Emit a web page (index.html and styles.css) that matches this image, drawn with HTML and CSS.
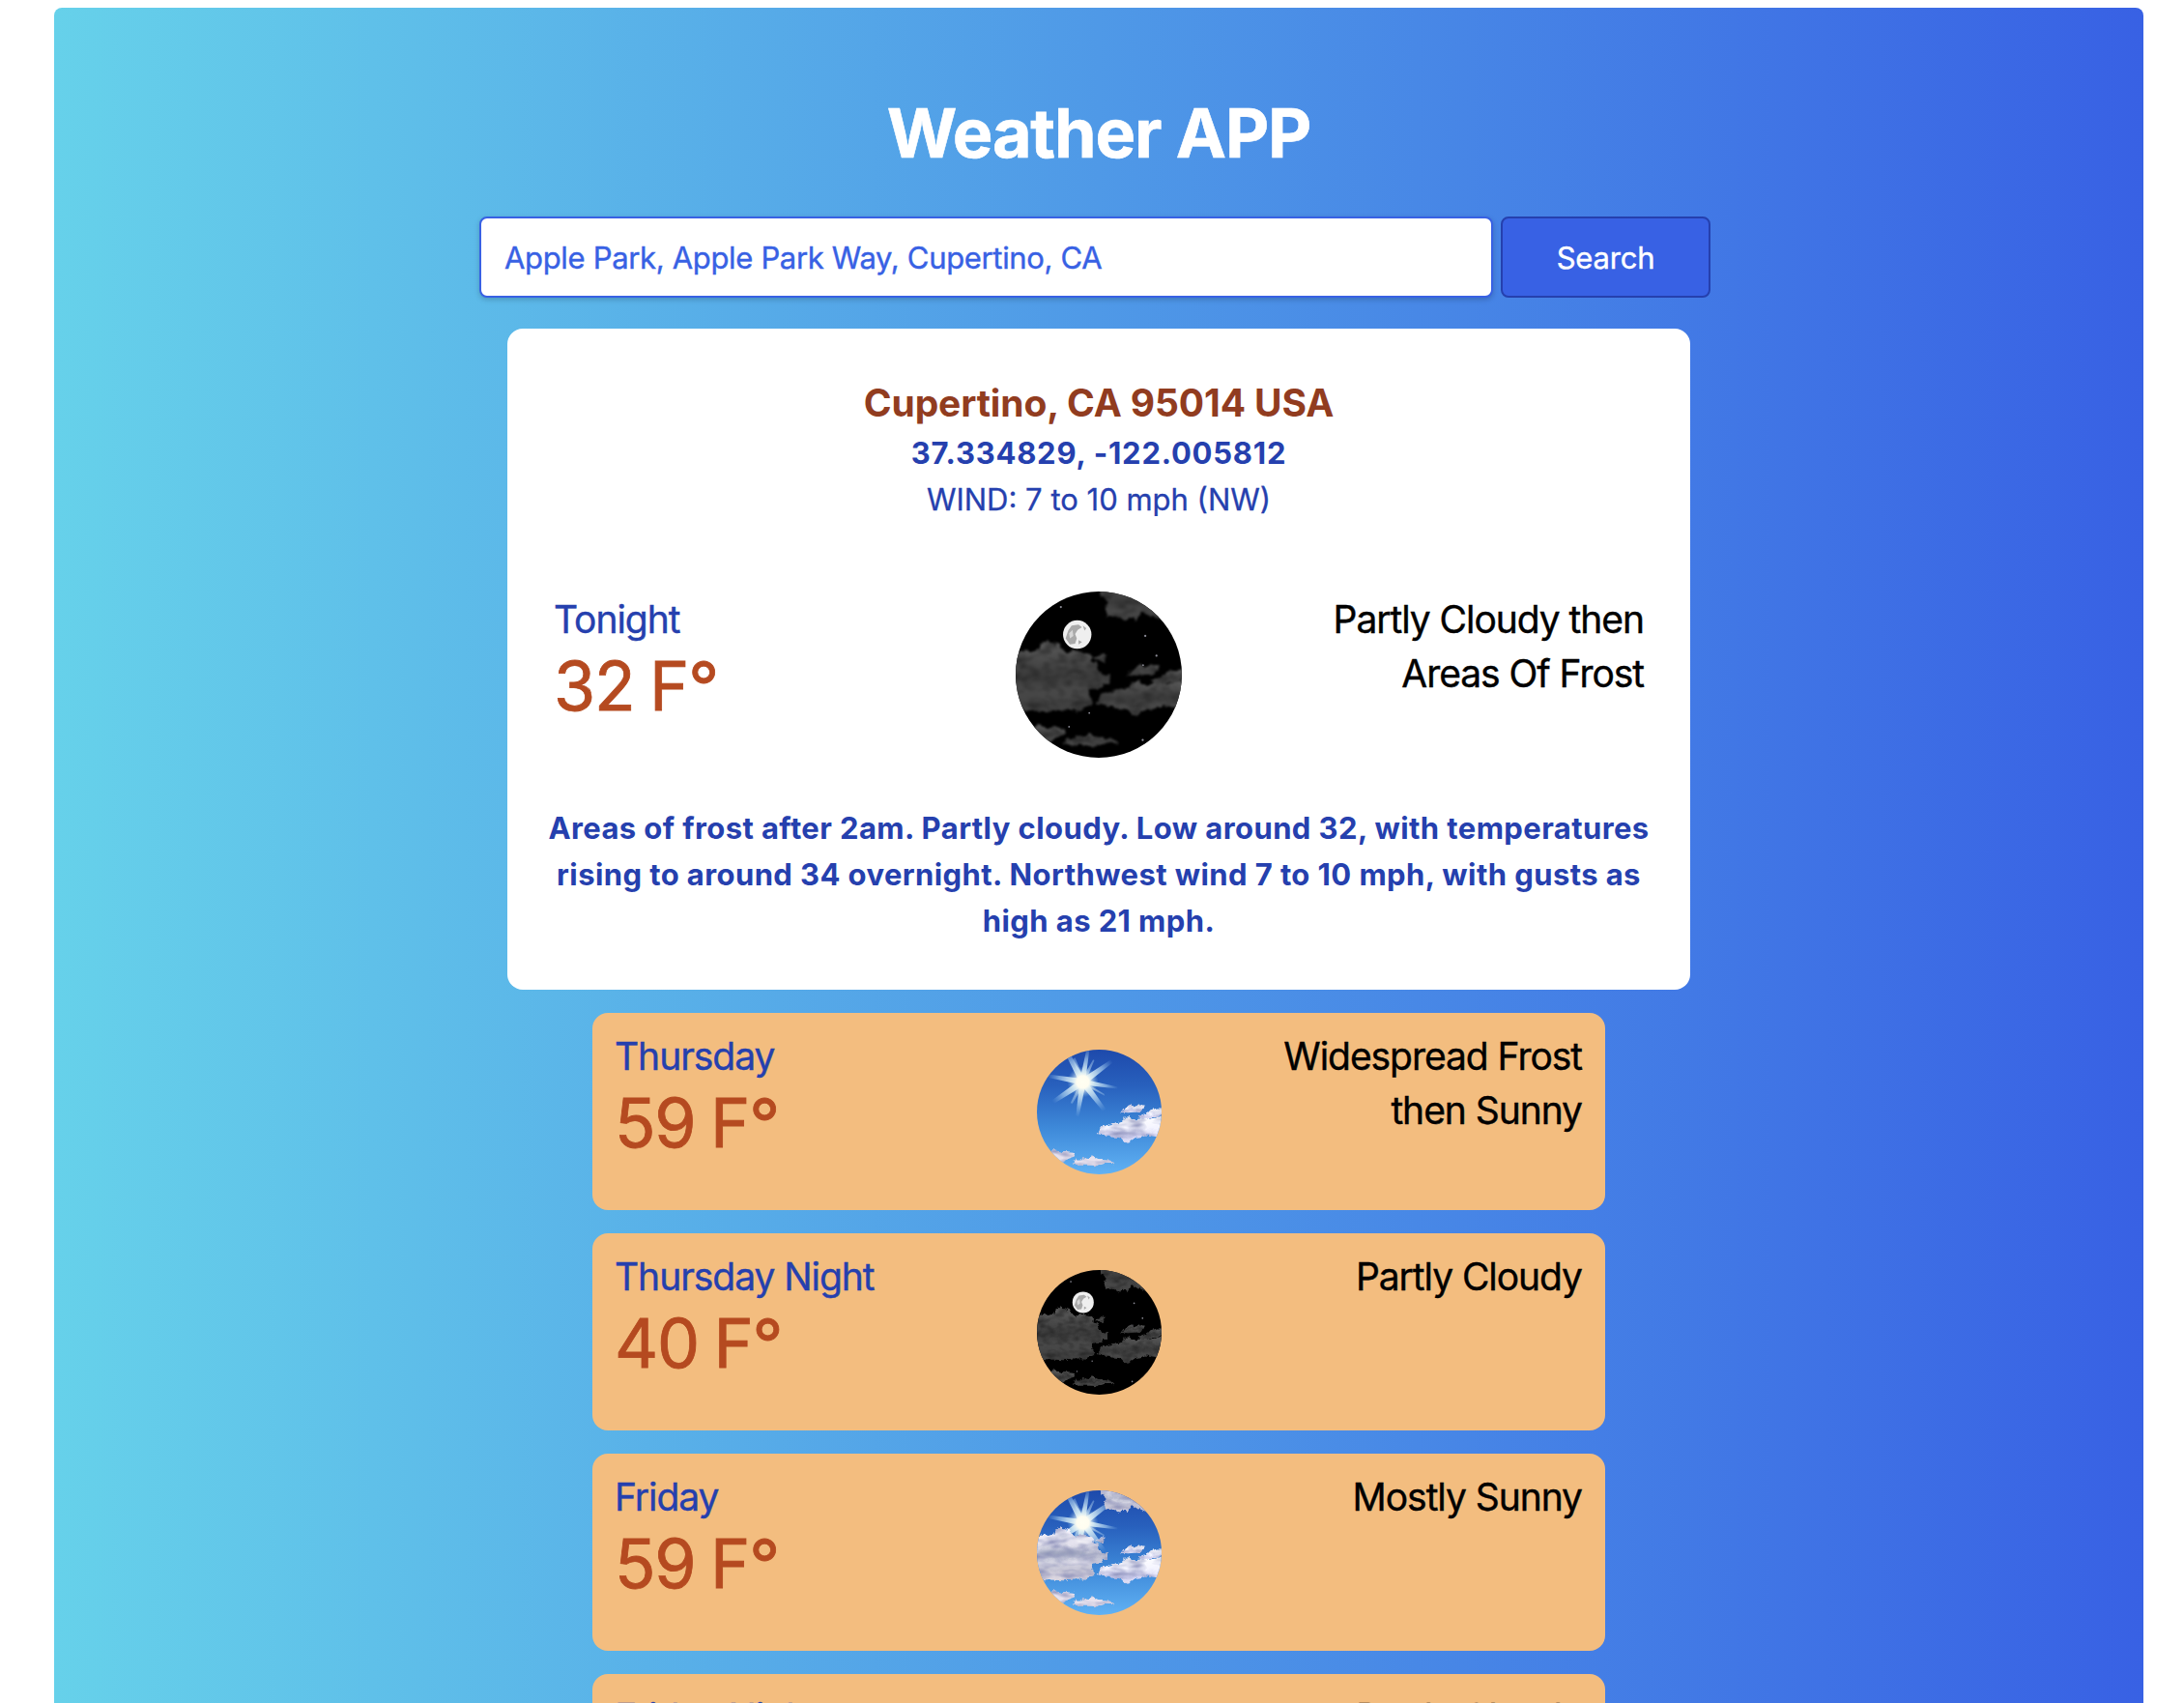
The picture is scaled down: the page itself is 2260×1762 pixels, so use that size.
FILE: index.html
```html
<!DOCTYPE html>
<html lang="en">
<head>
<meta charset="utf-8">
<title>Weather APP</title>
<link rel="stylesheet" href="styles.css">
</head>
<body>
<svg class="defs" width="0" height="0" aria-hidden="true">
  <defs>
    <linearGradient id="sky" x1="0" y1="0" x2="0" y2="1">
      <stop offset="0" stop-color="#1d48aa"/><stop offset=".3" stop-color="#2860bd"/>
      <stop offset=".62" stop-color="#3d88d8"/><stop offset="1" stop-color="#62b3f5"/>
    </linearGradient>
    <linearGradient id="dayCloud" x1="0" y1="0" x2="0" y2="1">
      <stop offset="0" stop-color="#f8f6ff"/><stop offset=".3" stop-color="#e4e2ee"/>
      <stop offset=".5" stop-color="#b4b8cc"/><stop offset=".65" stop-color="#d4d4e2"/>
      <stop offset=".8" stop-color="#c4c3d3"/><stop offset="1" stop-color="#e2dce4"/>
    </linearGradient>
    <linearGradient id="whiteCloud" x1="0" y1="0" x2="0" y2="1">
      <stop offset="0" stop-color="#ffffff"/><stop offset=".45" stop-color="#f4f4ff"/>
      <stop offset=".75" stop-color="#d0d0f0"/><stop offset="1" stop-color="#e4e4f8"/>
    </linearGradient>
    <linearGradient id="nightCloud" x1="0" y1="0" x2="0" y2="1">
      <stop offset="0" stop-color="#5a5a5a"/><stop offset=".3" stop-color="#484848"/>
      <stop offset=".5" stop-color="#3a3a3a"/><stop offset=".7" stop-color="#484848"/>
      <stop offset="1" stop-color="#404040"/>
    </linearGradient>
    <radialGradient id="ray" gradientUnits="userSpaceOnUse" cx="210" cy="169" r="112">
      <stop offset="0" stop-color="#fffff4"/><stop offset=".3" stop-color="#dff0f4" stop-opacity=".95"/>
      <stop offset=".65" stop-color="#a9cfee" stop-opacity=".65"/><stop offset="1" stop-color="#7fb2e6" stop-opacity="0"/>
    </radialGradient>
    <radialGradient id="glow">
      <stop offset="0" stop-color="#fffff2"/><stop offset=".4" stop-color="#fffdf0"/>
      <stop offset=".55" stop-color="#e4f1f3" stop-opacity=".7"/><stop offset="1" stop-color="#8fc0e8" stop-opacity="0"/>
    </radialGradient>
    <filter id="ragged" x="-5%" y="-10%" width="110%" height="120%" color-interpolation-filters="sRGB">
      <feTurbulence type="fractalNoise" baseFrequency=".06" numOctaves="3" seed="4" result="n"/>
      <feDisplacementMap in="SourceGraphic" in2="n" scale="18" xChannelSelector="R" yChannelSelector="G" result="shape"/>
      <feTurbulence type="fractalNoise" baseFrequency=".02 .05" numOctaves="2" seed="9"/>
      <feColorMatrix values="0 0 0 0 .5  0 0 0 0 .52  0 0 0 0 .7  1.6 0 0 0 -.6"/>
      <feComposite in2="shape" operator="in" result="tone"/>
      <feMerge><feMergeNode in="shape"/><feMergeNode in="tone"/></feMerge>
      <feGaussianBlur stdDeviation="1.7"/>
    </filter>
    <filter id="ragged-night" x="-5%" y="-10%" width="110%" height="120%" color-interpolation-filters="sRGB">
      <feTurbulence type="fractalNoise" baseFrequency=".06" numOctaves="3" seed="4" result="n"/>
      <feDisplacementMap in="SourceGraphic" in2="n" scale="18" xChannelSelector="R" yChannelSelector="G" result="shape"/>
      <feTurbulence type="fractalNoise" baseFrequency=".03 .05" numOctaves="2" seed="9"/>
      <feColorMatrix values="0 0 0 0 .1  0 0 0 0 .1  0 0 0 0 .1  1.4 0 0 0 -.6"/>
      <feComposite in2="shape" operator="in" result="tone"/>
      <feMerge><feMergeNode in="shape"/><feMergeNode in="tone"/></feMerge>
      <feGaussianBlur stdDeviation="2"/>
    </filter>
    <filter id="soft"><feGaussianBlur stdDeviation="1.4"/></filter>
    <filter id="shade" x="-20%" y="-40%" width="140%" height="180%"><feGaussianBlur stdDeviation="5"/></filter>

    <g id="clouds-right">
      <path d="M256 326 264 312 284 306 300 297 326 292 338 281 356 279 366 287 392 282 420 283 440 276 470 282 470 336 436 338 408 334 382 340 364 344 350 358 336 350 326 342 300 340 280 334Z"/>
      <path d="M329 262 340 246 352 240 370 244 384 238 402 238 398 254 378 262 350 264Z"/>
      <path d="M382 278 396 270 410 266 420 255 440 250 470 250 470 276 430 276 410 284 396 284Z"/>
    </g>
    <g id="clouds-low">
      <path d="M90 388 116 381 134 383 146 388 160 384 188 386 184 400 166 406 150 420 110 415Z"/>
      <path d="M174 419 196 411 212 405 228 407 240 400 258 407 280 408 306 415 300 422 276 422 256 429 226 427 190 427Z"/>
    </g>
    <g id="clouds-left">
      <path d="M50 214 80 205 104 209 120 206 124 192 140 184 156 187 168 192 174 206 190 209 206 204 230 206 242 216 240 230 252 236 260 252 268 260 290 264 288 282 262 290 240 296 236 312 248 324 240 336 218 346 180 346 150 348 110 346 50 342Z"/>
      <path d="M246 220 262 216 280 218 276 230 258 230Z"/>
      <path d="M262 40 266 82 282 94 276 110 280 128 300 124 320 136 336 128 346 140 358 122 376 118 390 128 420 140 440 120 400 40Z"/>
    </g>
    <g id="sun">
      <g fill="url(#ray)" filter="url(#soft)">
        <path d="M200 167 218 167 232 58 224 58Z"/>
        <path d="M204 160 216 178 322 94 316 88Z"/>
        <path d="M210 160 210 178 318 190 318 184Z"/>
        <path d="M202 175 220 164 292 268 284 274Z"/>
        <path d="M200 169 220 170 198 276 189 274Z"/>
        <path d="M203 161 216 178 104 246 98 238Z"/>
        <path d="M210 159 210 179 104 156 106 146Z"/>
        <path d="M202 175 219 164 168 78 156 82Z"/>
        <path d="M204 166 216 172 246 102 242 100ZM206 164 214 178 278 212 276 206ZM204 166 216 172 178 236 172 234ZM204 172 216 164 186 94 180 98Z" opacity=".6"/>
      </g>
      <circle cx="210" cy="169" r="48" fill="url(#glow)"/>
    </g>
    <g id="night">
      <rect x="60" y="60" width="400" height="400" fill="#000"/>
      <g filter="url(#soft)">
        <circle cx="211" cy="169" r="33" fill="#efefef"/>
        <path d="M190 160 198 148 214 146 222 152 212 158 206 168 210 178 206 190 194 192 184 178ZM224 148 232 154 228 160ZM214 182 222 186 214 192Z" fill="#8c8c8c" opacity=".7"/>
        <path d="M192 166 200 158 202 172 194 178Z" fill="#d6d6d6"/>
      </g>
      <g fill="url(#nightCloud)" filter="url(#ragged-night)">
        <use href="#clouds-left"/><use href="#clouds-right"/><use href="#clouds-low"/>
      </g>
      <g fill="#8d8d98">
        <circle cx="173" cy="105" r="2.5"/><circle cx="369" cy="172" r="2.5"/><circle cx="395" cy="218" r="2.5"/>
        <circle cx="239" cy="351" r="2"/><circle cx="192" cy="383" r="2"/><circle cx="363" cy="414" r="2.5"/><circle cx="364" cy="240" r="2"/>
      </g>
    </g>
    <g id="sunny">
      <rect x="60" y="60" width="400" height="400" fill="url(#sky)"/>
      <use href="#sun"/>
      <g fill="url(#whiteCloud)" filter="url(#ragged)"><use href="#clouds-right"/></g>
      <g fill="#e8e2ee" filter="url(#ragged)"><use href="#clouds-low"/></g>
    </g>
    <g id="mostly-sunny">
      <use href="#sunny"/>
      <g fill="url(#dayCloud)" filter="url(#ragged)"><use href="#clouds-left"/></g>
      <g filter="url(#shade)" opacity=".5">
        <ellipse cx="145" cy="262" rx="70" ry="9" fill="#8f97b4"/>
        <ellipse cx="150" cy="210" rx="16" ry="8" fill="#a4abc6"/>
        <ellipse cx="215" cy="226" rx="24" ry="9" fill="#fff"/>
        <ellipse cx="190" cy="292" rx="50" ry="5" fill="#f4f0f8"/>
      </g>
    </g>
  </defs>
</svg>

<main class="app">
  <h1 class="title">Weather APP</h1>
  <form class="search">
    <input class="search-input" type="text" value="Apple Park, Apple Park Way, Cupertino, CA" aria-label="Address">
    <button class="search-button" type="button">Search</button>
  </form>

  <section class="current">
    <h2 class="place">Cupertino, CA 95014 USA</h2>
    <p class="coords">37.334829, -122.005812</p>
    <p class="wind">WIND: 7 to 10 mph (NW)</p>
    <div class="period period-current">
      <div class="reading"><p class="name">Tonight</p><p class="temp">32 F°</p></div>
      <svg class="picture" viewBox="68 69 386 386"><use href="#night"/></svg>
      <p class="summary">Partly Cloudy then<br>Areas Of Frost</p>
    </div>
    <p class="details">Areas of frost after 2am. Partly cloudy. Low around 32, with temperatures<br>rising to around 34 overnight. Northwest wind 7 to 10 mph, with gusts as<br>high as 21 mph.</p>
  </section>

  <section class="forecast">
    <article class="period card">
      <div class="reading"><p class="name">Thursday</p><p class="temp">59 F°</p></div>
      <svg class="picture" viewBox="68 69 386 386"><use href="#sunny"/></svg>
      <p class="summary">Widespread Frost<br>then Sunny</p>
    </article>
    <article class="period card">
      <div class="reading"><p class="name">Thursday Night</p><p class="temp">40 F°</p></div>
      <svg class="picture" viewBox="68 69 386 386"><use href="#night"/></svg>
      <p class="summary">Partly Cloudy</p>
    </article>
    <article class="period card">
      <div class="reading"><p class="name">Friday</p><p class="temp">59 F°</p></div>
      <svg class="picture" viewBox="68 69 386 386"><use href="#mostly-sunny"/></svg>
      <p class="summary">Mostly Sunny</p>
    </article>
    <article class="period card">
      <div class="reading"><p class="name">Friday Night</p></div>
      <span></span>
      <p class="summary">Partly Cloudy</p>
    </article>
  </section>
</main>
</body>
</html>
```

FILE: styles.css
```css
* { box-sizing: border-box; }

html, body { height: 100%; overflow: hidden; }

body {
  margin: 0;
  padding: 8px 42px 0 56px;
  background: #fff;
  color: #000;
  font: 31px/48px "Inter", "Liberation Sans", sans-serif;
}

h1, h2, p { margin: 0; }

.defs { position: absolute; }

.app {
  display: flex;
  flex-direction: column;
  align-items: center;
  height: 100%;
  overflow: hidden;
  padding-top: 90px;
  border-radius: 8px 8px 0 0;
  background: linear-gradient(90deg, #66d1ea, #3861e4);
}

.title {
  flex: none;
  margin-bottom: 46px;
  color: #fff;
  font-size: 70px;
  font-weight: 700;
  line-height: 80px;
  letter-spacing: -1.15px;
  -webkit-text-stroke: .6px;
}

.search {
  display: flex;
  flex: none;
  gap: 8px;
  width: 1274px;
  height: 84px;
  margin: 0 8px 32px 0;
}

.search-input {
  flex: 1;
  min-width: 0;
  padding: 1px 24px 0;
  border: 2px solid #3861e4;
  border-radius: 8px;
  background: #fff;
  box-shadow: 0 2px 6px rgba(0, 0, 0, .14), 0 2px 4px rgba(0, 0, 0, .06);
  color: #3861e4;
  font: inherit;
  letter-spacing: -.33px;
  -webkit-text-stroke: .4px;
}

.search-button {
  width: 217px;
  padding: 1px 0 0;
  border: 2px solid #2540ae;
  border-radius: 8px;
  background: #3861e4;
  color: #fff;
  font: inherit;
  letter-spacing: -.2px;
  -webkit-text-stroke: .4px;
}

.current {
  flex: none;
  width: 1224px;
  height: 684px;
  padding: 49px 48px 0;
  border-radius: 16px;
  background: #fff;
  color: #2540ae;
  text-align: center;
}

.place {
  color: #913c1f;
  font-size: 39px;
  font-weight: 700;
  line-height: 56px;
  letter-spacing: -.13px;
}

.coords {
  font-weight: 700;
  letter-spacing: .77px;
}

.wind { -webkit-text-stroke: .3px; }

.period {
  display: grid;
  grid-template-columns: 1fr auto 1fr;
  font-size: 39px;
  line-height: 56px;
  letter-spacing: -1.05px;
  -webkit-text-stroke: .4px;
}

.period-current { margin: 71px 0 49px; }

.reading { text-align: left; }

.name {
  padding-top: 1px;
  color: #2540ae;
}

.temp {
  padding-top: 1px;
  color: #b54a20;
  font-size: 70px;
  line-height: 80px;
  letter-spacing: -1.2px;
  word-spacing: -3px;
  -webkit-text-stroke: .8px;
}

.summary {
  padding-top: 1px;
  color: #000;
  text-align: right;
}

.picture {
  display: block;
  width: 172px;
  height: 172px;
  border-radius: 50%;
}

.details {
  margin: 0 -24px;
  font-weight: 700;
  letter-spacing: .41px;
  white-space: nowrap;
}

.forecast {
  display: flex;
  flex: 1;
  flex-direction: column;
  gap: 24px;
  width: 1048px;
  min-height: 0;
  margin-top: 24px;
  overflow: hidden;
}

.card {
  flex: none;
  height: 204px;
  padding: 16px 24px;
  border-radius: 16px;
  background: #f3bd7f;
}

.card .reading { margin-left: -1px; }

.card .picture {
  align-self: center;
  width: 129px;
  height: 129px;
}
```
